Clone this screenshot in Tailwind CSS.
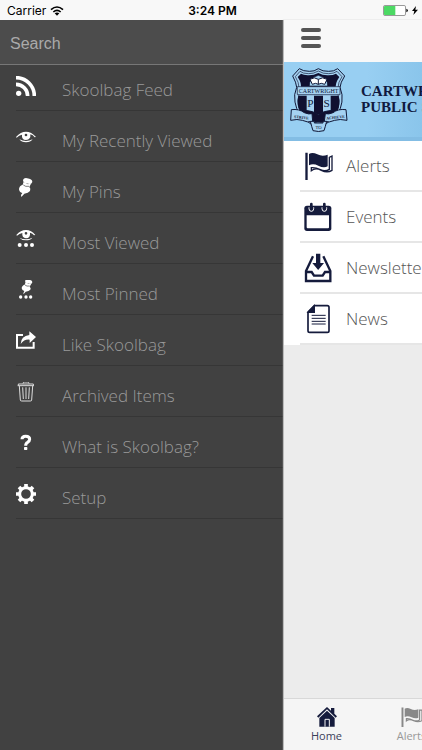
<!DOCTYPE html>
<html lang="en">

<head>
    <meta charset="UTF-8">
    <meta name="viewport" content="width=device-width, initial-scale=1.0">
    <title>Skoolbag</title>
    <script src="https://cdn.jsdelivr.net/npm/@tailwindcss/browser@4"></script>
</head>
<body class="flex h-screen flex-col overflow-hidden bg-[#f8f8f8] font-['Open_Sans',sans-serif]">
    <!-- Status bar -->
    <div class="grid h-5 shrink-0 grid-cols-3 items-center pt-px pr-1 pl-[7px] font-['Inter',sans-serif] text-xs leading-4 text-black">
        <div class="flex items-center gap-1">
            <span>Carrier</span>
            <svg class="h-[10px] w-[14px]" viewBox="0 0 42 30" fill="none" stroke="#000" stroke-width="5">
                <path d="M3 11Q21 -5 39 11M10 18Q21 8 32 18" />
                <path d="M14 22Q21 17 28 22L21 29Z" fill="#000" stroke="none" />
            </svg>
        </div>
        <span class="text-center font-semibold">3:24 PM</span>
        <div class="flex items-center justify-end gap-1">
            <svg class="h-[11px] w-[25px]" viewBox="0 0 75 33">
                <rect x="1.5" y="1.5" width="66" height="30" rx="4" fill="#fff" stroke="#666" stroke-width="2" />
                <path d="M3 5Q3 3 5 3H37V30H5Q3 30 3 28Z" fill="#4cd964" />
                <path d="M70 11Q75 13 75 16.500T70 22Z" fill="#111" />
            </svg>
            <svg class="h-[9px] w-[6px]" viewBox="0 0 18 27"><path d="M12 0 0 15H7L4 27 18 11H10Z" /></svg>
        </div>
    </div>

    <div class="flex min-h-0 flex-1">
        <!-- Side menu -->
        <nav class="w-[284px] shrink-0 bg-[#414141]">
            <label class="sr-only" for="search">Search</label>
            <input id="search" type="search" placeholder="Search"
                class="block h-[45px] w-full border-b border-[#777] bg-[#4c4c4c] px-[10px] pt-[3px] font-['Liberation_Sans',sans-serif] text-base text-white placeholder:text-[#aaa] focus:outline-none">
            <ul class="pl-4 text-[17px] leading-6 font-light text-[#999]">
                <li class="h-[46px] border-b border-[#363636]">
                    <a href="#feed" class="flex h-full items-end gap-[26px]">
                        <svg class="mb-[14px] size-5" viewBox="0 0 60 60" fill="none" stroke="#fff" stroke-width="11">
                            <circle cx="8" cy="52" r="8" fill="#fff" stroke="none" />
                            <path d="M0 25A35 35 0 0 1 35 60M0 5A55 55 0 0 1 55 60" />
                        </svg>
                        <span class="mb-2">Skoolbag Feed</span>
                    </a>
                </li>
                <li class="h-[51px] border-b border-[#363636]">
                    <a href="#recent" class="flex h-full items-end gap-[26px]">
                        <svg class="mb-[14px] size-5" viewBox="0 0 60 60" fill="#fff">
                            <path fill-rule="evenodd" d="M0 30Q14 14 30 14T60 30L56 31Q51 24 43 22Q45 38 30 39Q16 38 18 23Q9 25 2 32ZM30 20A4 4 0 1 0 30 28A4 4 0 0 0 30 20Z" />
                            <path d="M10 37Q30 47 50 37Q44 46 30 46T10 37Z" />
                        </svg>
                        <span class="mb-2">My Recently Viewed</span>
                    </a>
                </li>
                <li class="h-[51px] border-b border-[#363636]">
                    <a href="#pins" class="flex h-full items-end gap-[26px]">
                        <svg class="mb-[14px] size-5" viewBox="0 0 60 60" fill="#fff">
                            <ellipse cx="35" cy="9" rx="14" ry="8" transform="rotate(14 35 9)" />
                            <path d="M23 11 20 20Q9 24 9 34Q10 43 19 45L15 51 16 57 25 47Q37 46 42 39Q45 32 40 27L46 15 36 19Z" />
                            <path d="M22 21Q28 27 39 25" fill="none" stroke="#414141" stroke-width="2" />
                        </svg>
                        <span class="mb-2">My Pins</span>
                    </a>
                </li>
                <li class="h-[51px] border-b border-[#363636]">
                    <a href="#most-viewed" class="flex h-full items-end gap-[26px]">
                        <svg class="mb-[14px] size-5" viewBox="0 0 60 60" fill="#fff">
                            <path fill-rule="evenodd" d="M1 18Q14 3 30 3T58 18L54 19Q50 13 42 11Q44 27 30 28Q17 27 19 12Q10 14 3 20ZM30 9A4 4 0 1 0 30 17A4 4 0 0 0 30 9Z" />
                            <path d="M10 26Q30 36 49 26Q43 34 30 34T10 26Z" />
                            <circle cx="11" cy="48" r="6" /><circle cx="30" cy="48" r="6" /><circle cx="48" cy="48" r="6" />
                        </svg>
                        <span class="mb-2">Most Viewed</span>
                    </a>
                </li>
                <li class="h-[51px] border-b border-[#363636]">
                    <a href="#most-pinned" class="flex h-full items-end gap-[26px]">
                        <svg class="mb-[14px] size-5" viewBox="0 0 60 60" fill="#fff">
                            <ellipse cx="38" cy="5" rx="11" ry="6" transform="rotate(12 38 5)" />
                            <path d="M29 6 26 14Q17 17 17 25Q18 31 25 33L22 40 23 42 29 35Q39 34 43 29Q46 24 41 20L47 9 38 12Z" />
                            <path d="M27 15Q32 20 41 18" fill="none" stroke="#414141" stroke-width="2" />
                            <circle cx="14" cy="51" r="5" /><circle cx="30" cy="51" r="5" /><circle cx="44" cy="51" r="5" />
                        </svg>
                        <span class="mb-2">Most Pinned</span>
                    </a>
                </li>
                <li class="h-[51px] border-b border-[#363636]">
                    <a href="#like" class="flex h-full items-end gap-[26px]">
                        <svg class="mb-[14px] size-5" viewBox="0 0 60 60" fill="#fff">
                            <path d="M21 12H3V50H53V33" fill="none" stroke="#fff" stroke-width="6" />
                            <path d="M40 1 60 18 41 36V26Q25 24 14 39Q15 15 40 12Z" />
                        </svg>
                        <span class="mb-2">Like Skoolbag</span>
                    </a>
                </li>
                <li class="h-[51px] border-b border-[#363636]">
                    <a href="#archived" class="flex h-full items-end gap-[26px]">
                        <svg class="mb-[14px] size-5" viewBox="0 0 60 60" fill="none" stroke="#ddd" stroke-width="3">
                            <path d="M7 11V6H52V11M5 11H54M21 5Q21 0 26 0H34Q39 0 39 5M10 12 13 54Q13 57 17 57H43Q47 57 47 54L50 12M20 16 22 51M30 16V51M40 16 38 51" />
                        </svg>
                        <span class="mb-2">Archived Items</span>
                    </a>
                </li>
                <li class="h-[51px] border-b border-[#363636]">
                    <a href="#about" class="flex h-full items-end gap-[26px]">
                        <svg class="mb-[14px] size-5" viewBox="0 0 60 60" fill="#fff">
                            <path d="M18 19Q18 10 29 10Q41 10 41 19Q41 24 35 28Q29 31 29 38" fill="none" stroke="#fff" stroke-width="9" />
                            <rect x="24" y="42" width="10" height="9" rx="2" />
                        </svg>
                        <span class="mb-2">What is Skoolbag?</span>
                    </a>
                </li>
                <li class="h-[51px] border-b border-[#363636]">
                    <a href="#setup" class="flex h-full items-end gap-[26px]">
                        <svg class="mb-[14px] size-5" viewBox="0 0 60 60" fill="none" stroke="#fff">
                            <circle cx="30" cy="30" r="19" stroke-width="9" />
                            <path stroke-width="11" d="M30 0V10M30 50V60M0 30H10M50 30H60M9 9 16 16M44 44 51 51M51 9 44 16M16 44 9 51" />
                        </svg>
                        <span class="mb-2">Setup</span>
                    </a>
                </li>
            </ul>
        </nav>

        <!-- School page, pushed to the right by the open menu -->
        <main class="relative flex min-w-0 flex-1 flex-col overflow-hidden bg-[#ececec] shadow-[-1px_0_1px_#bbb]">
            <header class="flex h-[42px] shrink-0 items-center bg-[#f8f8f8] px-4 pb-1.5">
                <button type="button" aria-label="Menu" class="ml-px flex w-5 flex-col gap-1">
                    <span class="h-1 w-full rounded-sm bg-[#555]"></span>
                    <span class="h-1 w-full rounded-sm bg-[#555]"></span>
                    <span class="h-1 w-full rounded-sm bg-[#555]"></span>
                </button>
            </header>

            <div class="flex h-[79px] shrink-0 gap-3 border-b-4 border-[#83bde4] bg-linear-to-r from-[#98cff2] from-60% to-[#8ac5eb] pt-[6px] pl-[6px]">
                <svg class="h-16 w-[58px] shrink-0" viewBox="0 0 174 192" fill="#a5d2f1" stroke="#101838" stroke-width="3">
                    <path d="M85 2Q73 11 58 10 39 10 28 2L8 24Q19 44 20 58L14 80Q13 104 20 121 31 154 85 180 139 154 151 121 158 104 156 80L150 58Q151 44 164 24L143 2Q131 11 116 10 98 11 85 2Z" />
                    <path d="M85 9Q70 18 55 17 39 17 30 10L16 26Q27 43 27 59V80Q20 99 26 119 40 145 85 168 130 145 145 119 151 99 144 80V59Q144 43 156 26L141 10Q131 17 116 17 99 18 85 9Z" stroke-width="2" />
                    <path d="M85 15Q70 23 53 22 41 21 33 17L23 27Q34 43 33 56H137Q137 43 148 27L138 17Q129 22 116 22 99 23 85 15Z" fill="#101030" stroke="none" />
                    <path d="M58 54Q56 31 85 22 115 31 113 54Z" stroke-width="2" />
                    <path d="M60 34Q73 25 85 34 98 25 111 34L104 49Q93 43 85 49 77 43 67 49Z" fill="#fff" />
                    <path d="M85 34V49" />
                    <path d="M25 83H50V130H30Q19 110 25 83ZM72 83H99V140H72ZM122 83H146Q152 110 142 130H122Z" fill="#101030" stroke="none" />
                    <path d="M22 56H150V80H22Z" stroke-width="2" />
                    <path d="M39 127Q72 128 85 141 98 128 132 127L132 145Q102 150 101 162H69Q69 150 39 145Z" fill="#101030" />
                    <path d="M4 125Q27 122 43 134 57 140 66 137L68 160Q53 165 37 157 22 152 2 157ZM168 125Q144 122 129 134 115 140 106 137L103 160Q118 165 134 157 149 152 171 157Z" stroke-width="3" />
                    <path d="M61 160H73V165H99V160H110L106 175 102 188Q86 193 69 188L65 175Z" stroke-width="3" />
                    <g fill="#101838" stroke="none" font-family="Liberation Serif, serif" text-anchor="middle">
                        <text x="86" y="75" font-size="18">CARTWRIGHT</text>
                        <text x="61" y="118" font-size="34">P</text>
                        <text x="110" y="118" font-size="34">S</text>
                        <text x="34" y="152" font-size="12" font-weight="bold" transform="rotate(6 34 152)">STRIVE</text>
                        <text x="137" y="152" font-size="12" font-weight="bold" transform="rotate(-6 137 152)">ACHIEVE</text>
                        <text x="86" y="182" font-size="14">TO</text>
                    </g>
                </svg>
                <p class="mt-[15px] ml-px font-['Liberation_Serif',serif] text-[15px] leading-4 font-bold whitespace-nowrap text-[#101a40]">CARTWRIGHT<br>PUBLIC SCHOOL</p>
            </div>

            <ul class="shrink-0 bg-white pl-4 text-[17px] font-light text-[#555]">
                <li class="h-[51px] border-b-2 border-[#e6e6e6]">
                    <a href="#alerts" class="flex h-full items-center gap-3 pl-1">
                        <svg class="size-[30px] shrink-0" viewBox="0 0 90 90" fill="#151b3c">
                            <path d="M4 5H11V87H4ZM15 9Q25 2 40 10T71 11V46Q59 52 43 44T15 43Z" />
                            <path d="M76 19 84 15V58Q70 67 52 58T22 59V50Q35 49 49 56T76 55Z" fill="#fff" stroke="#151b3c" stroke-width="4" />
                        </svg>
                        <span>Alerts</span>
                    </a>
                </li>
                <li class="h-[51px] border-b-2 border-[#e6e6e6]">
                    <a href="#events" class="flex h-full items-center gap-3 pl-1">
                        <svg class="size-[30px] shrink-0" viewBox="0 0 90 90">
                            <rect x="1" y="11" width="81" height="76" rx="8" fill="#151b3c" />
                            <path d="M8 40H75V76Q75 79 72 79H11Q8 79 8 76Z" fill="#fff" />
                            <path d="M15 16V20Q15 28 22 28T29 20V16M54 16V20Q54 28 61 28T68 20V16" fill="none" stroke="#fff" stroke-width="3" />
                            <path d="M22 6V20M61 6V20" stroke="#151b3c" stroke-width="8" stroke-linecap="round" />
                        </svg>
                        <span>Events</span>
                    </a>
                </li>
                <li class="h-[51px] border-b-2 border-[#e6e6e6]">
                    <a href="#newsletters" class="flex h-full items-center gap-3 pl-1">
                        <svg class="size-[30px] shrink-0" viewBox="0 0 90 90" fill="none" stroke="#151b3c" stroke-width="7">
                            <path d="M27 10 6 54V84H79V54L58 10M6 57H23L30 68H56L63 57H79" />
                            <path d="M36 2H49V30H60L42.500 51 25 30H36Z" fill="#151b3c" stroke="none" />
                        </svg>
                        <span>Newsletters</span>
                    </a>
                </li>
                <li class="h-[51px] border-b-2 border-[#e6e6e6]">
                    <a href="#news" class="flex h-full items-center gap-3 pl-1">
                        <svg class="size-[30px] shrink-0" viewBox="0 0 90 90" fill="none" stroke="#151b3c" stroke-width="4">
                            <path d="M31 5H70Q75 5 75 10V80Q75 85 70 85H17Q12 85 12 80V24Z" stroke-width="5" />
                            <path d="M31 5V25H12Z" fill="#151b3c" />
                            <path d="M23 34H65M23 43H65M23 52H65M23 60H65" stroke-width="3" />
                        </svg>
                        <span>News</span>
                    </a>
                </li>
            </ul>

            <nav class="mt-auto flex h-[52px] shrink-0 border-t border-[#d8d8d8] bg-[#f5f5f5] text-[11px] leading-4 text-[#999]">
                <a href="#home" class="flex w-[85px] shrink-0 flex-col items-center gap-px pt-2 text-[#3b405a]">
                    <svg class="size-5" viewBox="0 0 60 60" fill="#151b3c">
                        <path d="M30 0 42 11V3H52V20L60 28 56 32 30 7 4 32 0 28Z" />
                        <path d="M30 11 53 33V59H7V33Z" />
                        <path d="M24 59V37H37V59" fill="none" stroke="#f5f5f5" stroke-width="3" />
                    </svg>
                    <span>Home</span>
                </a>
                <a href="#tab-alerts" class="flex w-[85px] shrink-0 flex-col items-center gap-px pt-2">
                    <svg class="h-5 w-[22px]" viewBox="0 0 90 82" fill="#888">
                        <path d="M2 2H10V82H2ZM15 7Q25 0 40 8T71 9V44Q59 50 43 42T15 41Z" />
                        <path d="M76 13H86V56Q70 65 52 56T22 57V48Q35 47 49 54T76 53Z" fill="#f5f5f5" stroke="#888" stroke-width="5" />
                    </svg>
                    <span>Alerts</span>
                </a>
            </nav>
        </main>
    </div>
</body>

</html>
